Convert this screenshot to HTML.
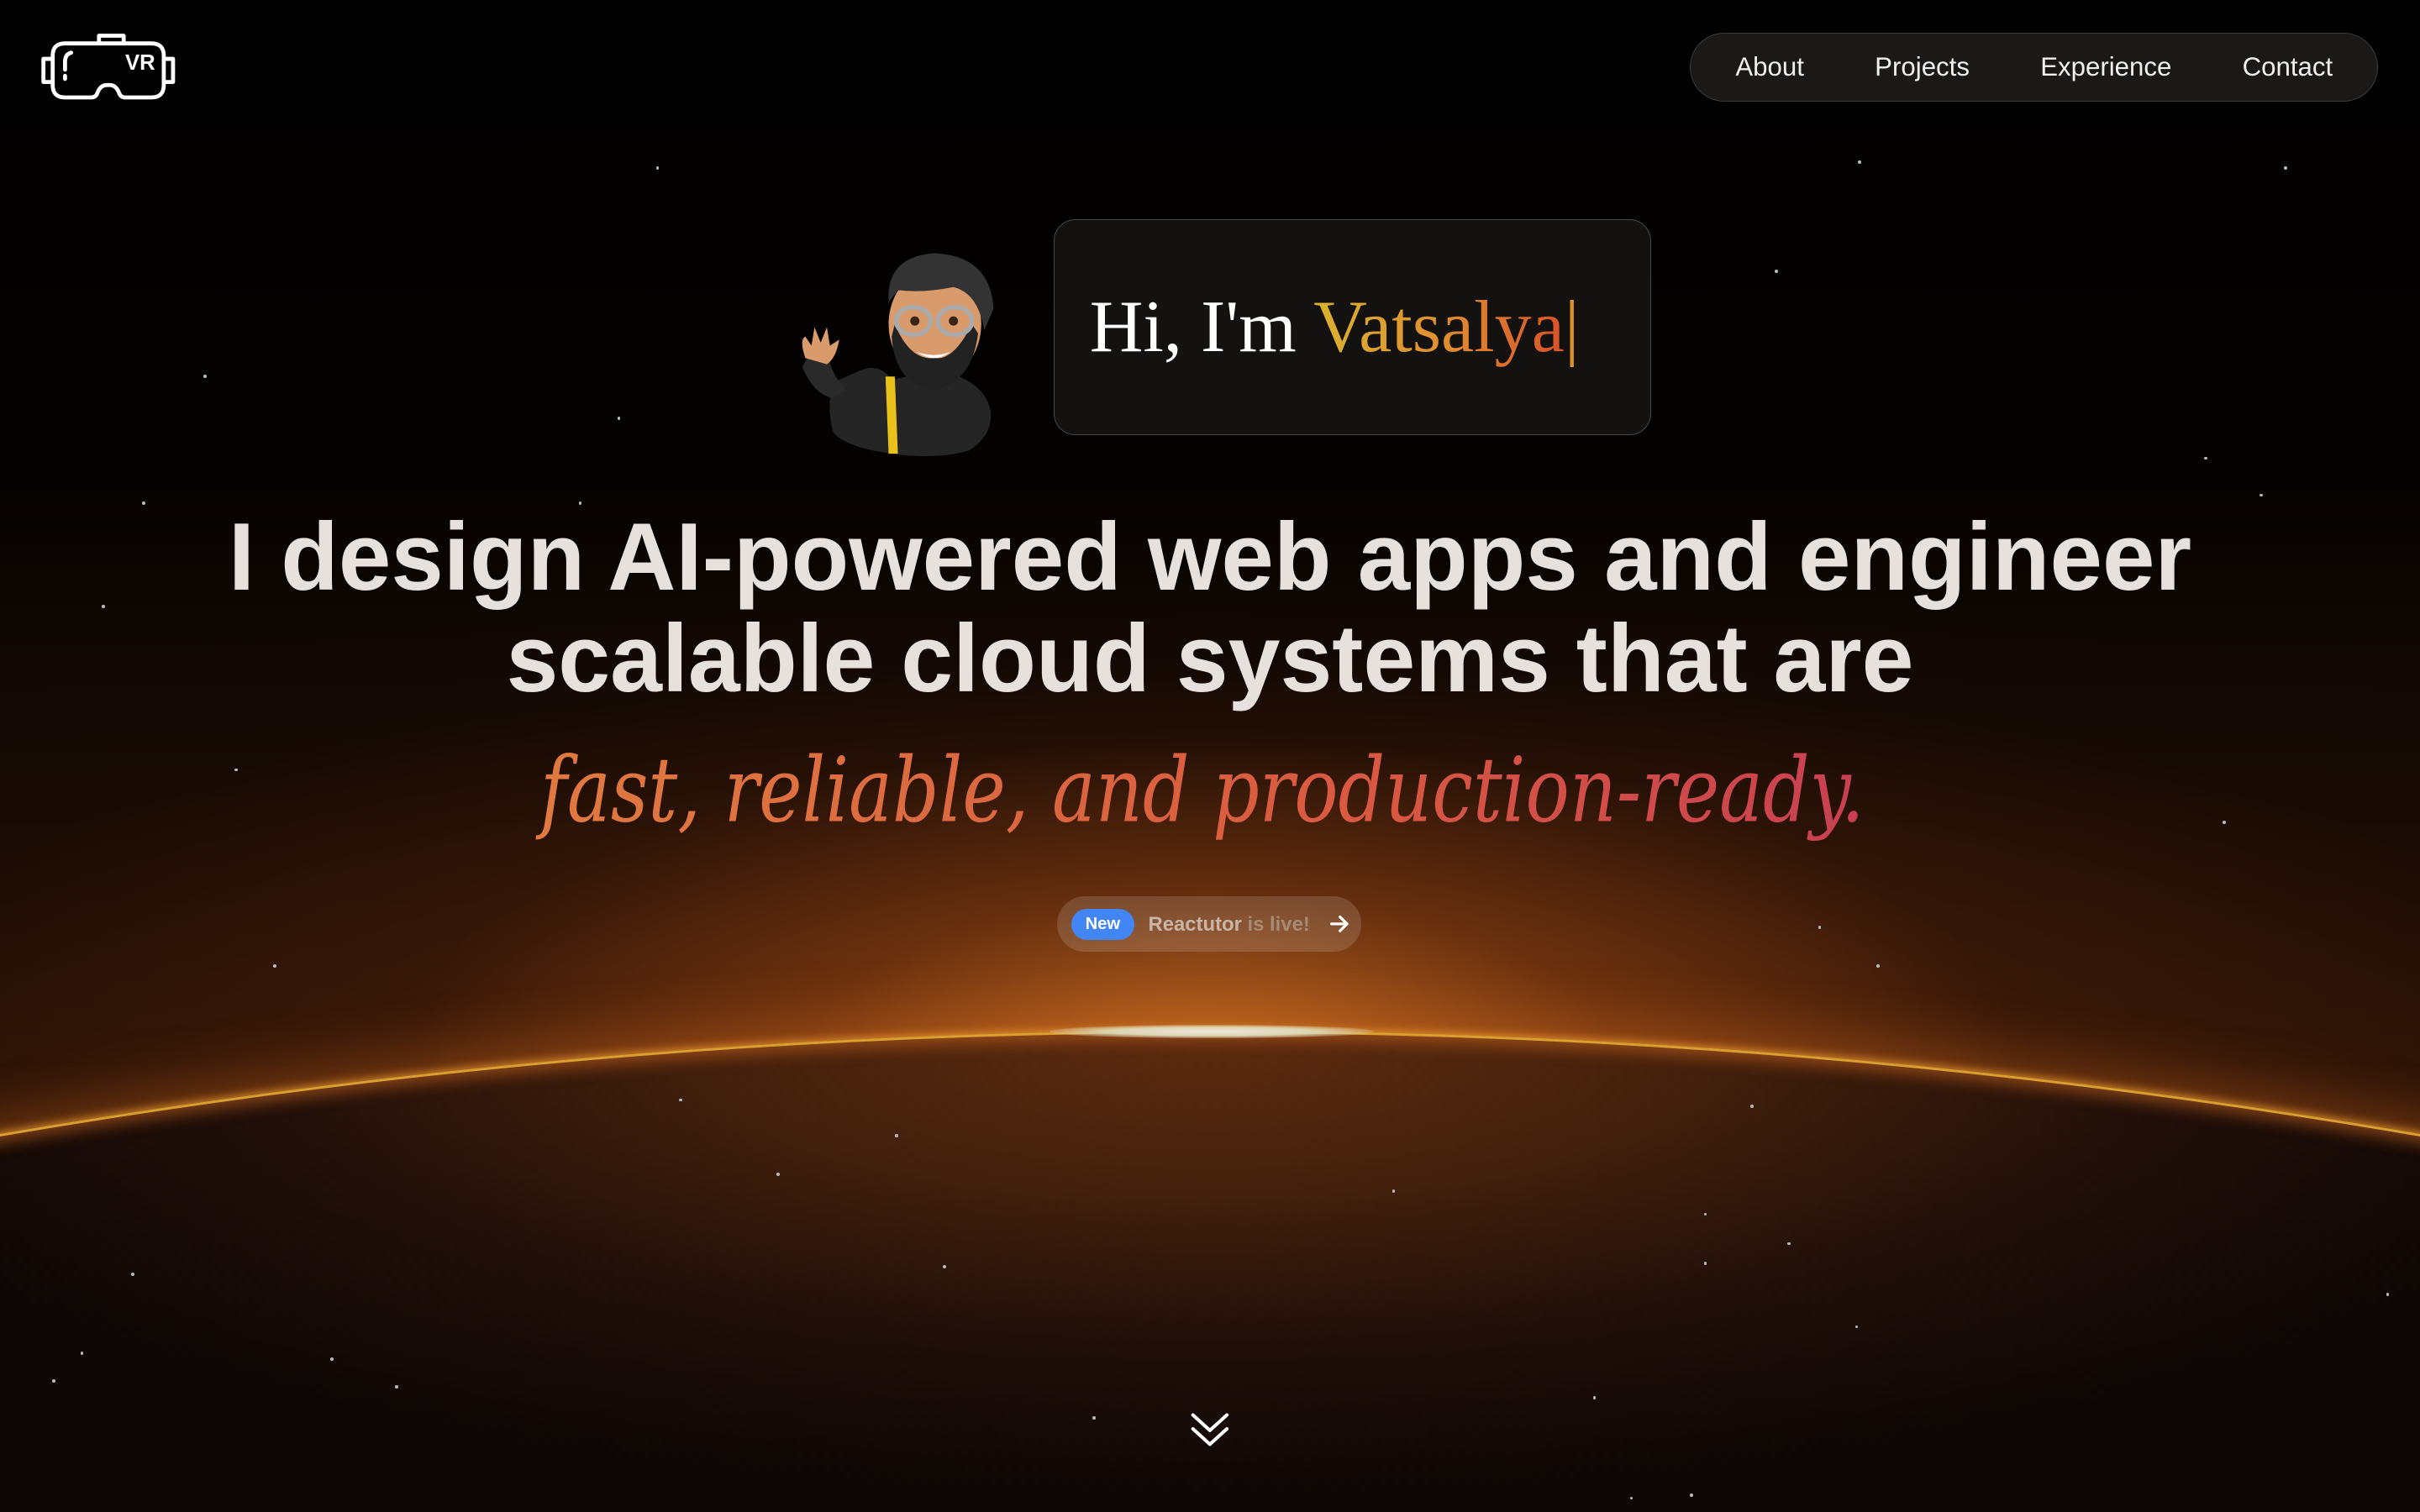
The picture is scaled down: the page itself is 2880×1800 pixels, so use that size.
<!DOCTYPE html>
<html><head><meta charset="utf-8">
<style>
html,body{margin:0;padding:0;background:#000;width:2880px;height:1800px;overflow:hidden}
#w{zoom:1.836735;width:1568px;height:980px;position:relative;overflow:hidden;font-family:"Liberation Sans",sans-serif;
background:radial-gradient(ellipse 520px 200px at 784px 680px,rgba(200,110,35,0.8),rgba(150,70,20,0.4) 50%,transparent),
radial-gradient(ellipse 1150px 330px at 784px 690px,rgba(120,55,18,0.85),rgba(70,30,10,0.6) 45%,rgba(25,10,4,0.3) 80%,transparent),
linear-gradient(#000 0,#050201 300px,#140904 480px,#200e05 600px,#2a1307 680px),#000;}
.clip{position:absolute;left:0;top:0;width:1568px;height:980px;overflow:hidden}
.planet{position:absolute;left:-3836px;top:668px;width:9240px;height:9240px;border-radius:50%;
background:radial-gradient(ellipse 950px 300px at 4620px 0px,#5e2c10,#42200c 35%,#22100a 65%,#0d0604 100%);
border-top:2px solid #d9a030;box-shadow:0 -1px 6px rgba(240,160,50,0.8),0 -8px 40px rgba(220,110,30,0.45),inset 0 4px 10px rgba(200,100,30,0.6);}
.cap{position:absolute;left:680px;top:664px;width:210px;height:9px;border-radius:50%;background:radial-gradient(ellipse at center,#ece8e0 0,#dcd4b0 45%,rgba(220,200,120,0) 80%)}
.star{position:absolute;width:2px;height:2px;border-radius:50%;background:#bbb}
nav{position:absolute;left:1095px;top:21px;width:446px;height:45px;border:1px solid #3c3c3c;border-radius:23px;background:#1a1918;display:flex;align-items:center;justify-content:space-around;padding:0 6px;box-sizing:border-box}
nav span{color:#f0f0f0;font-size:17px}
.box{position:absolute;left:683px;top:142px;width:386px;height:139px;border:1px solid #4a4744;border-radius:14px;background:#141210}
.hi{position:absolute;left:706px;top:184px;font-family:"Liberation Serif",serif;font-size:48px;color:#fff;white-space:nowrap}
.hi b{font-weight:normal;background:linear-gradient(90deg,#d9b230,#e09030 50%,#d9522a);-webkit-background-clip:text;color:transparent}
.badge{position:absolute;left:685px;top:581px;width:197px;height:36px;border-radius:18px;background:rgba(255,255,255,0.14)}
.new{position:absolute;left:9px;top:8px;width:41px;height:20px;border-radius:10px;background:#4285f4;color:#fff;font-size:11px;font-weight:bold;text-align:center;line-height:20px}
.bt{position:absolute;left:59px;top:11px;font-size:13px;font-weight:bold;color:#c8b5a5;white-space:nowrap}
.bt i{font-style:normal;color:#a88a75}
</style></head><body><div id="w">
<div class="clip"><div class="planet"></div></div><div class="cap"></div>
<div class="star" style="left:425px;top:108px"></div><div class="star" style="left:1204px;top:104px"></div><div class="star" style="left:1480px;top:108px"></div>
<div class="star" style="left:132px;top:243px"></div><div class="star" style="left:1150px;top:175px"></div><div class="star" style="left:1428px;top:296px"></div>
<div class="star" style="left:92px;top:325px"></div><div class="star" style="left:375px;top:325px"></div><div class="star" style="left:1464px;top:320px"></div>
<div class="star" style="left:66px;top:392px"></div><div class="star" style="left:1440px;top:532px"></div><div class="star" style="left:152px;top:498px"></div>
<div class="star" style="left:177px;top:625px"></div><div class="star" style="left:1216px;top:625px"></div><div class="star" style="left:1178px;top:600px"></div>
<div class="star" style="left:440px;top:712px"></div><div class="star" style="left:1134px;top:716px"></div><div class="star" style="left:580px;top:735px"></div>
<div class="star" style="left:503px;top:760px"></div><div class="star" style="left:902px;top:771px"></div><div class="star" style="left:1104px;top:786px"></div>
<div class="star" style="left:1158px;top:805px"></div><div class="star" style="left:1104px;top:818px"></div><div class="star" style="left:611px;top:820px"></div>
<div class="star" style="left:85px;top:825px"></div><div class="star" style="left:1546px;top:838px"></div><div class="star" style="left:1202px;top:859px"></div>
<div class="star" style="left:52px;top:876px"></div><div class="star" style="left:214px;top:880px"></div><div class="star" style="left:34px;top:894px"></div>
<div class="star" style="left:256px;top:898px"></div><div class="star" style="left:1032px;top:905px"></div><div class="star" style="left:708px;top:918px"></div>
<div class="star" style="left:1095px;top:968px"></div><div class="star" style="left:1056px;top:970px"></div><div class="star" style="left:400px;top:270px"></div>

<svg style="position:absolute;left:26px;top:20px" width="88" height="47" viewBox="0 0 88 47" fill="none" stroke="#fff" stroke-width="2.6" stroke-linecap="round" stroke-linejoin="round">
<path d="M38 8 V3 H54 V8"/>
<path d="M16 8 H72 Q80 8 80 16 V35 Q80 43 72 43 H55 Q52 43 51 40 Q49 35 45 35 H43 Q39 35 37 40 Q36 43 33 43 H16 Q8 43 8 35 V16 Q8 8 16 8 Z"/>
<path d="M8 18 H2 V33 H8 M80 18 H86 V33 H80"/>
<path d="M20 14 Q16 15 16 20 V25 M16 29 V31"/>
<text x="55" y="25" font-family="Liberation Sans" font-weight="bold" font-size="14" fill="#fff" stroke="none">VR</text>
</svg>
<nav><span>About</span><span>Projects</span><span>Experience</span><span>Contact</span></nav>

<svg style="position:absolute;left:518px;top:160px" width="132" height="136" viewBox="0 0 132 136">
<path d="M22 120 Q16 95 26 86 L40 80 Q52 75 60 86 L90 80 Q120 86 124 106 Q126 122 110 132 Q90 138 60 134 Q30 130 22 120Z" fill="#252525"/>
<path d="M6 70 L2 78 Q10 96 22 98 L30 92 Q20 82 18 66 Z" fill="#2a2a2a"/>
<path d="M4 72 Q0 60 4 58 L8 64 L10 52 L14 62 L18 52 L20 64 L26 60 Q24 72 18 76 Z" fill="#d99a6c"/>
<path d="M56 84 L58 134 L64 134 L62 84Z" fill="#e8c21a"/>
<ellipse cx="88" cy="50" rx="30" ry="36" fill="#d99a6c"/>
<path d="M60 58 Q62 90 88 92 Q112 88 116 56 L112 50 Q100 74 88 72 Q72 74 62 50Z" fill="#222"/>
<path d="M58 36 Q56 6 88 4 Q124 6 126 40 L120 54 Q116 30 100 26 Q80 30 64 28 Z" fill="#333"/>
<ellipse cx="74" cy="48" rx="11" ry="9" fill="none" stroke="#aaa" stroke-width="3"/>
<ellipse cx="101" cy="48" rx="11" ry="9" fill="none" stroke="#aaa" stroke-width="3"/>
<circle cx="75" cy="48" r="3" fill="#3a2515"/><circle cx="100" cy="48" r="3" fill="#3a2515"/>
<path d="M76 68 Q88 76 98 68 Q88 72 76 68Z" fill="#fff"/>
</svg>
<div class="box"></div>
<div class="hi">Hi, I'm <b>Vatsalya</b><span style="color:#e0902a;font-weight:normal">|</span></div>

<svg style="position:absolute;left:0;top:320px" width="1568" height="250">
<text x="784" y="62" text-anchor="middle" font-family="Liberation Sans" font-weight="bold" font-size="62" fill="#e6e1dd" textLength="1272" lengthAdjust="spacingAndGlyphs">I design AI-powered web apps and engineer</text>
<text x="784" y="128" text-anchor="middle" font-family="Liberation Sans" font-weight="bold" font-size="62" fill="#e6e1dd" textLength="912" lengthAdjust="spacingAndGlyphs">scalable cloud systems that are</text>
<defs><linearGradient id="g" x1="0" x2="1"><stop offset="0" stop-color="#e07a40"/><stop offset="0.6" stop-color="#d95a40"/><stop offset="1" stop-color="#c84050"/></linearGradient></defs>
<text x="779" y="212" text-anchor="middle" font-family="DejaVu Serif" font-style="italic" font-size="58" fill="url(#g)" textLength="858" lengthAdjust="spacingAndGlyphs">fast, reliable, and production-ready.</text>
</svg>

<div class="badge"><div class="new">New</div><div class="bt">Reactutor <i>is live!</i></div>
<svg style="position:absolute;left:176px;top:11px" width="14" height="14" viewBox="0 0 14 14" fill="none" stroke="#fff" stroke-width="1.8" stroke-linecap="round" stroke-linejoin="round"><path d="M2 7H12M7.5 2.5L12 7L7.5 11.5"/></svg></div>

<svg style="position:absolute;left:771px;top:914px" width="26" height="26" viewBox="0 0 26 26" fill="none" stroke="#fff" stroke-width="2.2" stroke-linecap="round" stroke-linejoin="round"><path d="M2 3L13 13L24 3M2 12L13 22L24 12"/></svg>
</div></body></html>
